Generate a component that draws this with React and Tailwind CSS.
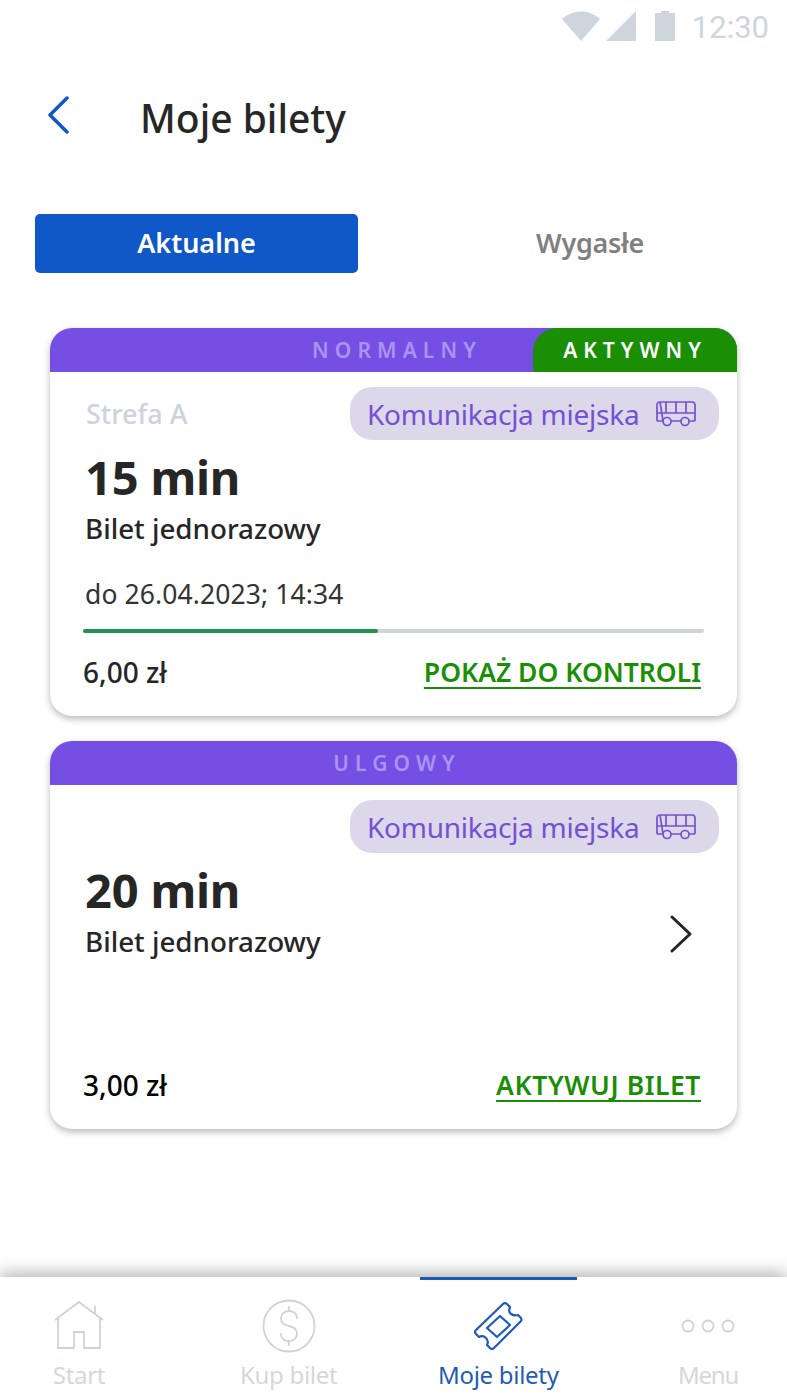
import React from 'react';

function Wedges() {
  return (
    <div className="flex items-start gap-[6px]">
      <svg width="38" height="30" viewBox="0 0 38 30" fill="#ced5dd">
        <path d="M0 8 C11 -2 27 -2 38 8 L19 30 Z" />
      </svg>
      <svg width="30" height="30" viewBox="0 0 30 30" fill="#ced5dd">
        <path d="M30 0 V30 H0 Z" />
      </svg>
      <svg className="ml-[13px]" width="20" height="30" viewBox="0 0 20 30" fill="#ced5dd">
        <path d="M0 2 H6 V0 H14 V2 H20 V30 H0 Z" />
      </svg>
    </div>
  );
}

function BusIcon() {
  return (
    <svg width="40" height="26" viewBox="0 0 40 26" fill="none" stroke="#7350d4" strokeWidth="1.7" strokeLinejoin="round">
      <path d="M4 1 H36 Q39 1 39 4 V19 Q39 20 37 20 H33 M25 20 H15 M7 20 H3 Q1 20 1 19 V4 Q1 1 4 1 Z" />
      <path d="M1 12 H39 M10 1 V12 M20 1 V12 M30 1 V12" />
      <circle cx="11" cy="20.500" r="4" />
      <circle cx="29" cy="20.500" r="4" />
    </svg>
  );
}

function TransportPill() {
  return (
    <div className="flex h-[53px] w-[369px] items-center justify-between rounded-[22px] bg-[#dcd8ea] pl-[17px] pr-[23px]">
      <span className="text-[28px] tracking-[-0.25px] text-[#7350d4]">Komunikacja miejska</span>
      <BusIcon />
    </div>
  );
}

function CardHeader({ label, active }) {
  return (
    <div className="relative flex h-[44px] items-center justify-center bg-[#754fe3]">
      <span className="pl-[7px] text-[21px] font-semibold leading-none tracking-[6.100px] text-[#a994f0]">{label}</span>
      {active && (
        <div className="absolute bottom-0 right-0 top-0 flex w-[204px] items-center justify-center rounded-tl-[24px] bg-[#1a8f06]">
          <span className="text-[21px] font-semibold leading-none tracking-[6px] text-white">{active}</span>
        </div>
      )}
    </div>
  );
}

function Ticket({ label, active, zone, time, until, progress, price, priceClass, action, actionClass, chevron }) {
  return (
    <div className="h-[388px] overflow-hidden rounded-[22px] bg-white shadow-[0_3px_7px_rgba(0,0,0,0.28)]">
      <CardHeader label={label} active={active} />
      <div className="relative h-[344px] pl-[33px] pr-[18px] pt-[15px]">
        <div className="flex h-[53px] items-center justify-between">
          <span className="pl-[3px] pt-[2px] text-[27px] font-medium text-[#ccd3dc]">{zone}</span>
          <TransportPill />
        </div>
        <div className="mt-[7px] pl-[2px] text-[47px] font-bold leading-[60px] tracking-[-0.2px] text-[#262626]">{time}</div>
        <div className="mt-[2px] pl-[2px] text-[27.750px] font-medium leading-[38px] text-[#262626]">Bilet jednorazowy</div>
        {until ? (
          <>
            <div className="mt-[28px] pl-[2px] text-[26.500px] leading-[38px] tracking-[0.1px] text-[#333333]">{until}</div>
            <div className="mr-[15px] mt-[16px] h-[4px] rounded-full bg-[#cfd4da]">
              <div className="h-[4px] rounded-full bg-[#1f9350]" style={{ width: `${progress}%` }} />
            </div>
          </>
        ) : (
          <div className="h-[86px]" />
        )}
        <div className="mr-[18px] mt-[19px] flex items-center justify-between">
          <span className={`text-[28px] font-medium leading-[40px] ${priceClass}`}>{price}</span>
          <span className={`text-[26.500px] font-semibold leading-[40px] text-[#1a8f06] underline decoration-2 underline-offset-[5px] ${actionClass}`}>{action}</span>
        </div>
        {chevron && (
          <svg className="absolute right-[44px] top-[130px]" width="24" height="38" viewBox="0 0 24 38" fill="none" stroke="#262626" strokeWidth="3" strokeLinecap="round" strokeLinejoin="round">
            <path d="M3 2 L21 19 L3 36" />
          </svg>
        )}
      </div>
    </div>
  );
}

function NavItem({ label, active, labelClass, children }) {
  return (
    <div className={`flex w-[157px] flex-col items-center border-t-[3px] ${active ? 'border-[#1e5bb8]' : 'border-transparent'}`}>
      <div className="flex h-[67px] w-full items-center justify-center pt-[24px]">{children}</div>
      <span className={`mt-[11px] text-[24px] leading-[34px] ${labelClass} ${active ? 'text-[#1e5bb8]' : 'text-[#d3d8de]'}`}>{label}</span>
    </div>
  );
}

export default function App() {
  return (
    <div className="flex h-[1400px] w-[787px] flex-col bg-white font-['Noto_Sans',sans-serif]">
      {/* status bar */}
      <div className="flex h-[54px] items-start justify-end gap-[17px] pr-[18px] pt-[11px]">
        <Wedges />
        <span className="pt-[2px] font-['Roboto',sans-serif] text-[31px] leading-[30px] text-[#ced5dd]">12:30</span>
      </div>

      {/* title */}
      <div className="flex h-[130px] items-center pl-[48px]">
        <svg className="mb-[8px]" width="21" height="38" viewBox="0 0 21 38" fill="none" stroke="#1257c6" strokeWidth="3.500" strokeLinecap="round" strokeLinejoin="round">
          <path d="M19 2 L2 19 L19 36" />
        </svg>
        <h1 className="mb-[2px] ml-[71px] text-[39px] font-medium text-[#262626]">Moje bilety</h1>
      </div>

      {/* tabs */}
      <div className="ml-[35px] mt-[30px] flex h-[59px]">
        <div className="flex w-[323px] items-center justify-center rounded-[5px] bg-[#1057c8] text-[27px] font-semibold text-white">Aktualne</div>
        <div className="ml-[35px] flex w-[394px] items-center justify-center text-[27px] font-semibold tracking-[-0.3px] text-[#808080]">Wygasłe</div>
      </div>

      {/* tickets */}
      <div className="mx-[50px] mt-[55px] flex flex-col gap-[25px]">
        <Ticket
          label="NORMALNY"
          active="AKTYWNY"
          zone="Strefa A"
          time="15 min"
          until="do 26.04.2023; 14:34"
          progress={47.500}
          price="6,00 zł"
          priceClass="text-[#262626]"
          action="POKAŻ DO KONTROLI"
          actionClass=""
        />
        <Ticket
          label="ULGOWY"
          time="20 min"
          price="3,00 zł"
          priceClass="text-black"
          action="AKTYWUJ BILET"
          actionClass="tracking-[0.55px]"
          chevron
        />
      </div>

      {/* bottom nav */}
      <div className="mt-auto flex h-[123px] justify-between px-[0.5px] shadow-[0_-4px_16px_rgba(0,0,0,0.3)]">
        <NavItem label="Start" labelClass="tracking-[-0.3px]">
          <svg width="50" height="50" viewBox="0 0 50 50" fill="none" stroke="#ced3d9" strokeWidth="1.800">
            <path d="M1 19 L25 1 L49 19 M41 13 V5 M4 16 V47 H20 V31 H30 V47 H46 V16" />
          </svg>
        </NavItem>
        <NavItem label="Kup bilet" labelClass="tracking-[-0.3px]">
          <svg width="54" height="54" viewBox="0 0 54 54" fill="none" stroke="#ced3d9" strokeWidth="1.800" strokeLinecap="round">
            <circle cx="27" cy="27" r="25.500" />
            <path d="M35 19 C35 14 31 12 27 12 C22 12 19 15 19 19.500 C19 24 22 26 27 27 C32 28 35 30 35 34.500 C35 39 32 42 27 42 C22 42 19 39 19 35 M27 8 V12 M27 42 V46" />
          </svg>
        </NavItem>
        <NavItem label="Moje bilety" active labelClass="tracking-[-0.3px]">
          <svg width="50" height="50" viewBox="0 0 50 50" fill="none" stroke="#1e5bb8" strokeWidth="2.200" strokeLinejoin="round">
            <path d="M30 3 Q32 1 34 3 L37 6 Q35 11 38 13 Q41 15 45 14 L48 17 Q49 19 48 20 L21 47 Q19 49 17 47 L14 44 Q16 40 13 37 Q10 34 6 36 L3 33 Q1 31 3 29 Z" />
            <path d="M27 15 L37 24 L24 36 L14 27 Z" />
          </svg>
        </NavItem>
        <NavItem label="Menu" labelClass="tracking-[-1.2px]">
          <svg width="54" height="16" viewBox="0 0 54 16" fill="none" stroke="#ced3d9" strokeWidth="1.800">
            <circle cx="7" cy="8" r="5.500" />
            <circle cx="27" cy="8" r="5.500" />
            <circle cx="47" cy="8" r="5.500" />
          </svg>
        </NavItem>
      </div>
    </div>
  );
}
